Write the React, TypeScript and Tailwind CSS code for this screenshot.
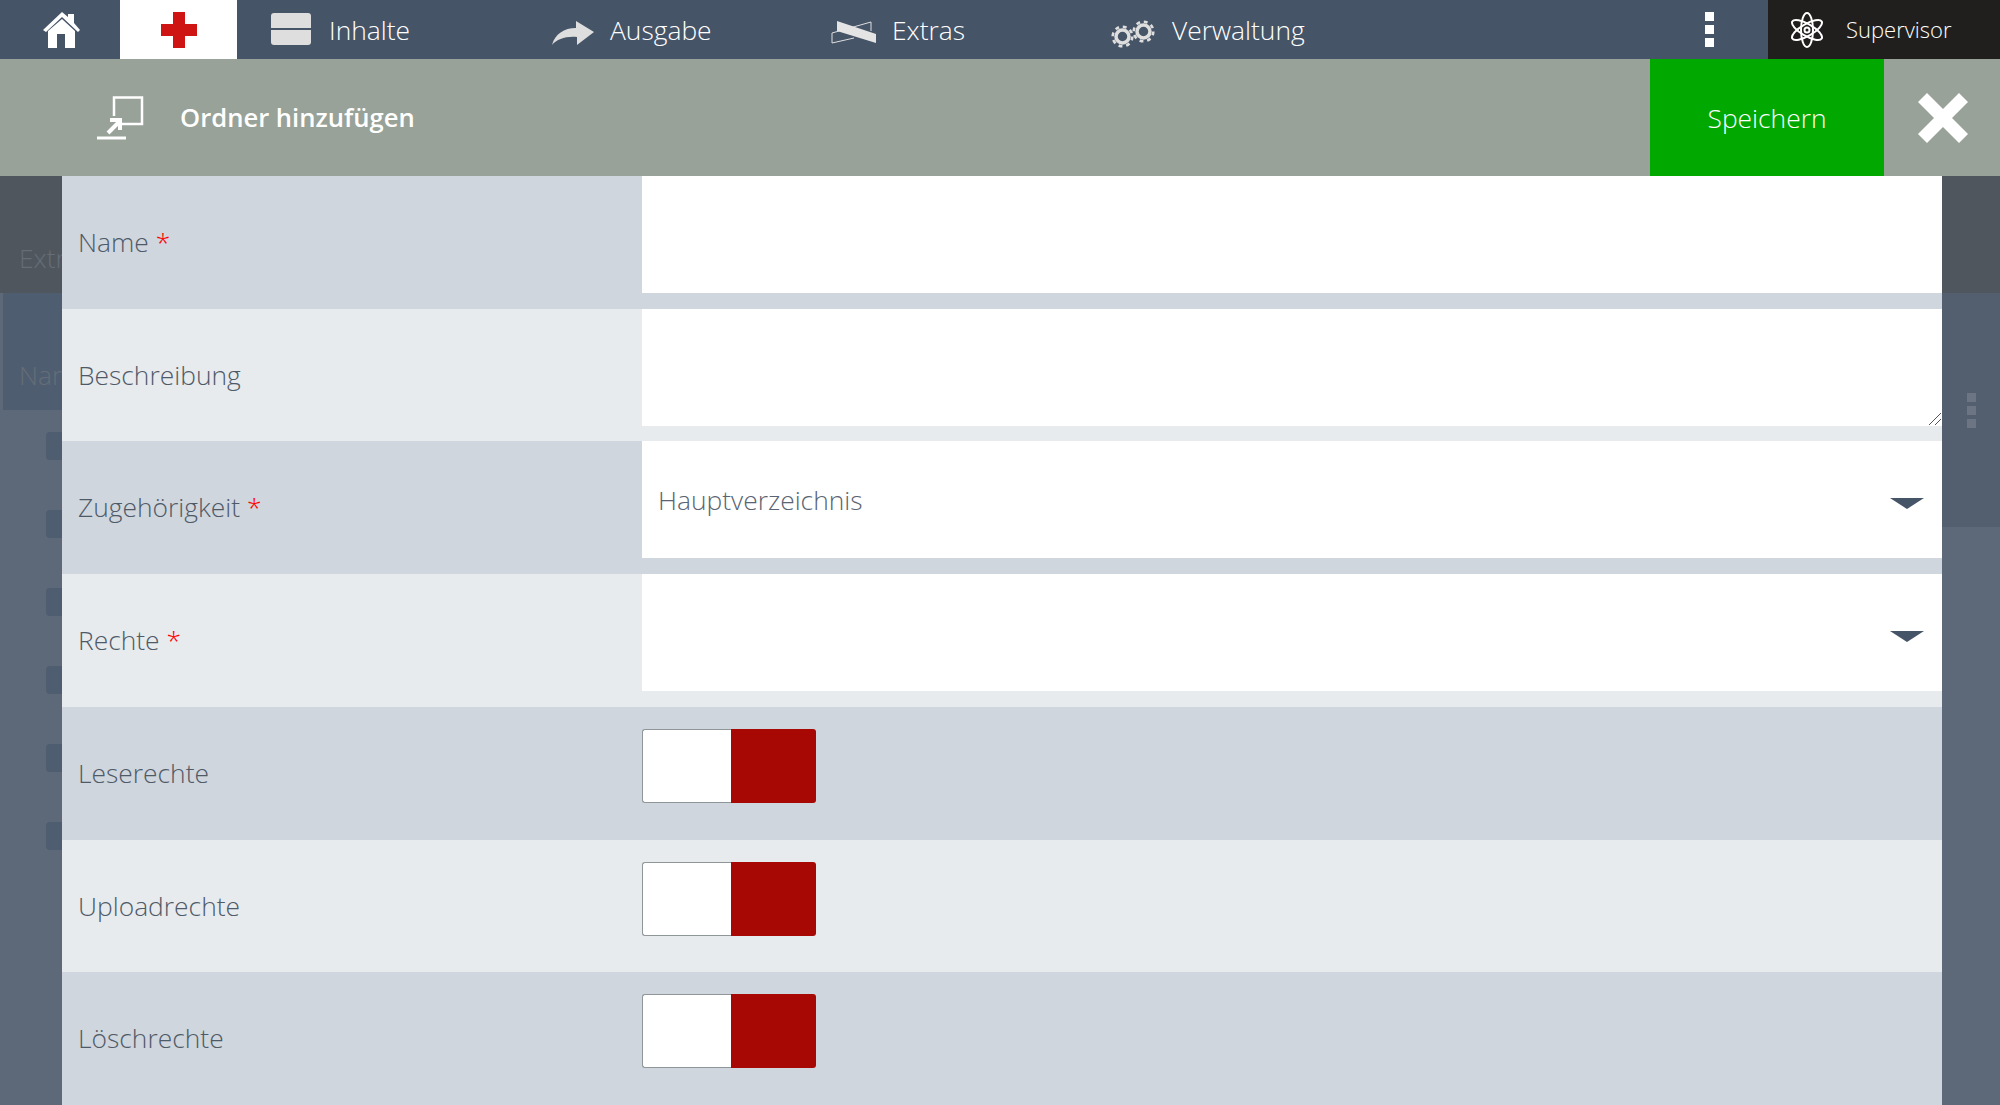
const rows = [
  { label: "Name", required: true, kind: "input" },
  { label: "Beschreibung", kind: "textarea" },
  { label: "Zugehörigkeit", required: true, kind: "select", value: "Hauptverzeichnis" },
  { label: "Rechte", required: true, kind: "select" },
  { label: "Leserechte", kind: "toggle" },
  { label: "Uploadrechte", kind: "toggle" },
  { label: "Löschrechte", kind: "toggle" },
];

function Caret() {
  return (
    <svg width="34" height="12" viewBox="0 0 34 12" className="absolute right-[18px] top-[57px]">
      <path d="M0 0H34L17 11Z" fill="#465468" />
    </svg>
  );
}

function Field({ kind, value }: { kind: string; value?: string }) {
  if (kind === "toggle") {
    return (
      <div className="mt-[22px] flex h-[74px] w-[174px]">
        <div className="w-[89px] rounded-l-[3px] border-y border-l border-[#8f9698] bg-white" />
        <div className="flex-1 rounded-r-[3px] bg-[#a80803]" />
      </div>
    );
  }
  return (
    <div className="relative h-[117px] bg-white">
      {value && <div className="pl-4 pt-[42px] text-[26.4px] leading-[34px] font-light text-[#5a6472]">{value}</div>}
      {kind === "select" && <Caret />}
      {kind === "textarea" && (
        <svg width="14" height="14" viewBox="0 0 14 14" className="absolute bottom-0 right-0">
          <path d="M1 13L13 1M7 13L13 7" stroke="#555" strokeWidth="1" />
        </svg>
      )}
    </div>
  );
}

function NavItem({ icon, label, width }: { icon: React.ReactNode; label: string; width: string }) {
  return (
    <div className={`flex items-center ${width}`}>
      {icon}
      <span className="pt-[2px] text-[26.4px] font-light text-white">{label}</span>
    </div>
  );
}

function Gear({ className }: { className: string }) {
  return (
    <svg width="23" height="23" viewBox="0 0 23 23" className={className} fill="none" stroke="#dedede">
      <circle cx="11.5" cy="11.5" r="6.5" strokeWidth="3.5" />
      <circle cx="11.5" cy="11.5" r="9.8" strokeWidth="2.6" strokeDasharray="3.85 3.85" />
    </svg>
  );
}

export default function App() {
  return (
    <div className="flex h-[1105px] w-[2000px] flex-col overflow-hidden bg-[#5d6879] font-['Open_Sans',sans-serif]">
      {/* top navigation */}
      <div className="flex h-[59px] items-center bg-[#465468]">
        <div className="flex w-[120px] pl-[43px]">
          <svg width="37" height="36" viewBox="0 0 37 36" fill="#fff">
            <path d="M19 0L25 5V2H31V11L37 18L35 20L19 5L3 20L0 18Z" />
            <path d="M5 19L19 7L32 19V36H22V22H14V36H5Z" />
          </svg>
        </div>
        <div className="flex h-full w-[117px] items-center justify-center bg-white">
          <svg width="36" height="36" viewBox="0 0 36 36">
            <path d="M12 0H24V12H36V24H24V36H12V24H0V12H12Z" fill="#cf1414" />
          </svg>
        </div>
        <div className="ml-[34px] flex">
          <NavItem
            width="w-[281px]"
            label="Inhalte"
            icon={
              <div className="mr-[18px] flex h-[32px] w-[40px] flex-col gap-[2px]">
                <div className="flex-1 rounded-t-[3px] bg-[#dedede]" />
                <div className="flex-1 rounded-b-[3px] bg-[#dedede]" />
              </div>
            }
          />
          <NavItem
            width="w-[279px]"
            label="Ausgabe"
            icon={
              <svg width="42" height="24" viewBox="0 0 42 24" className="mr-[16px] mt-[8px]">
                <path d="M24 0L42 11L25 24V16C14 15 5 18 0 24C3 13 12 7 24 7Z" fill="#dedede" />
              </svg>
            }
          />
          <NavItem
            width="w-[280px]"
            label="Extras"
            icon={
              <svg width="46" height="24" viewBox="0 0 46 24" className="mr-[15px] mt-[5px]">
                <path d="M1 13V23L23 18M1 13L40 2V11" stroke="#dedede" strokeWidth="1" fill="none" />
                <path d="M6 1L45 14V23L6 11Z" fill="#e4e4e4" />
              </svg>
            }
          />
          <div className="flex items-center">
            <div className="relative mr-[17px] mt-[10px] h-[28px] w-[44px]">
              <Gear className="absolute bottom-0 left-0" />
              <Gear className="absolute right-0 top-0" />
            </div>
            <span className="pt-[2px] text-[26.4px] font-light text-white">Verwaltung</span>
          </div>
        </div>
        <div className="ml-auto mr-[54px] flex flex-col gap-[4px]">
          <div className="h-[9px] w-[9px] bg-white" />
          <div className="h-[9px] w-[9px] bg-white" />
          <div className="h-[9px] w-[9px] bg-white" />
        </div>
        <div className="flex h-full w-[232px] items-center bg-[#211f1d] pl-[22px]">
          <svg width="34" height="36" viewBox="0 0 34 36" fill="none" stroke="#fff" strokeWidth="2">
            <ellipse cx="17" cy="18" rx="6" ry="17" />
            <ellipse cx="17" cy="18" rx="6" ry="17" transform="rotate(60 17 18)" />
            <ellipse cx="17" cy="18" rx="6" ry="17" transform="rotate(-60 17 18)" />
            <circle cx="17" cy="18" r="2.5" />
          </svg>
          <span className="ml-[22px] text-[22px] font-light text-white">Supervisor</span>
        </div>
      </div>

      {/* dialog title */}
      <div className="flex h-[117px] items-center bg-[#98a299]">
        <svg width="48" height="46" viewBox="0 0 48 46" className="ml-[96px]" fill="none" stroke="#fff" strokeWidth="2.5">
          <path d="M18 21V2.5H46V29H26" />
          <path d="M1 43H30" strokeWidth="3" />
          <path d="M12 38L23 27M14 25H24V35" strokeWidth="4" />
        </svg>
        <span className="ml-[36px] pt-[2px] text-[25.6px] font-semibold text-white">Ordner hinzufügen</span>
        <div className="ml-auto flex h-full w-[234px] items-center justify-center bg-[#00a800] pt-[2px] text-[26.4px] font-light text-white">
          Speichern
        </div>
        <div className="flex w-[116px] justify-center pl-[2px]">
          <svg width="50" height="50" viewBox="0 0 50 50">
            <path d="M9 0L25 16L41 0L50 9L34 25L50 41L41 50L25 34L9 50L0 41L16 25L0 9Z" fill="#fff" />
          </svg>
        </div>
      </div>

      <div className="flex min-h-0 flex-1">
        {/* dimmed page, left */}
        <div className="flex w-[62px] flex-col overflow-hidden whitespace-nowrap text-[26.4px] font-light text-[#656d77]">
          <div className="flex h-[117px] shrink-0 items-end bg-[#50565d] pb-[14px] pl-[19px]">Extras</div>
          <div className="ml-[3px] flex h-[117px] shrink-0 items-end bg-[#4f5d70] pb-[14px] pl-[16px]">Name</div>
          <div className="flex flex-col gap-[50px] pt-[22px] pl-[46px]">
            {[0, 1, 2, 3, 4, 5].map((i) => (
              <div key={i} className="h-[28px] w-[30px] shrink-0 rounded-[4px] bg-[#4f5d70]" />
            ))}
          </div>
        </div>

        {/* form */}
        <div className="flex w-[1880px] flex-col">
          {rows.map((row, i) => (
            <div key={row.label} className={`flex flex-1 ${i % 2 === 0 ? "bg-[#cfd6dd]" : "bg-[#e8ebee]"}`}>
              <div className="w-[580px] pl-4 pt-[48px] text-[26.4px] leading-[36px] font-light text-[#4f5a68]">
                {row.label}
                {row.required && <span className="text-[#ff0000]"> *</span>}
              </div>
              <div className="flex-1">
                <Field kind={row.kind} value={row.value} />
              </div>
            </div>
          ))}
        </div>

        {/* dimmed page, right */}
        <div className="flex flex-1 flex-col">
          <div className="h-[117px] bg-[#50565d]" />
          <div className="flex h-[234px] items-center justify-center bg-[#535f6e]">
            <div className="flex flex-col gap-[4px]">
              <div className="h-[9px] w-[9px] bg-[#6b7584]" />
              <div className="h-[9px] w-[9px] bg-[#6b7584]" />
              <div className="h-[9px] w-[9px] bg-[#6b7584]" />
            </div>
          </div>
        </div>
      </div>
    </div>
  );
}
